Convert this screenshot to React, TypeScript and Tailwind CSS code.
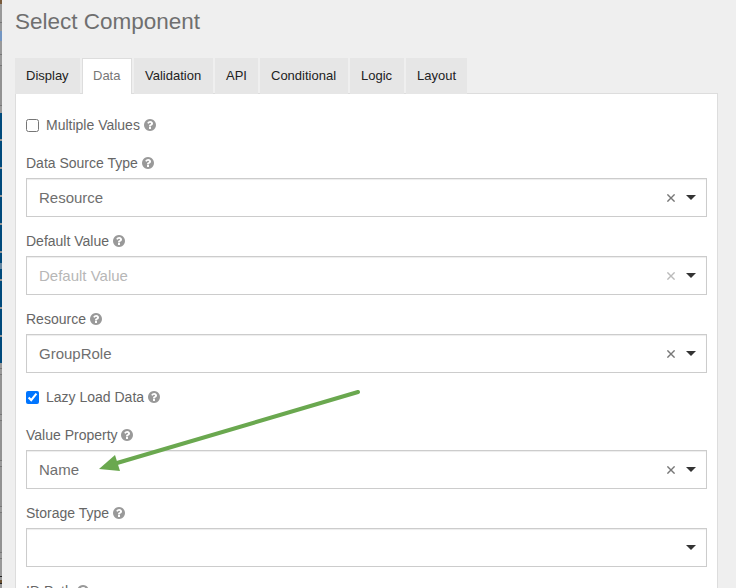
const QUESTION =
  "M1024 1376v-192q0-14-9-23t-23-9h-192q-14 0-23 9t-9 23v192q0 14 9 23t23 9h192q14 0 23-9t9-23zm256-672q0-88-55.5-163t-138.5-116-170-41q-243 0-371 213-15 24 8 42l132 100q7 6 19 6 16 0 25-12 53-68 86-92 34-24 86-24 48 0 85.5 26t37.5 59q0 38-20 61t-68 45q-63 28-115.5 86.5t-52.5 125.5v36q0 14 9 23t23 9h192q14 0 23-9t9-23q0-19 21.5-49.5t54.5-49.5q32-18 49-28.5t46-35 44.5-48 28-60.5 12.5-81zm384 192q0 209-103 385.5t-279.5 279.5-385.5 103-385.5-103-279.5-279.5-103-385.5 103-385.5 279.5-279.5 385.5-103 385.5 103 279.5 279.5 103 385.5z";

function Label({ text }: { text: string }) {
  return (
    <span className="flex h-5 items-center text-[14px] leading-5 text-[#666]">
      <span className="whitespace-pre">{text} </span>
      <svg viewBox="128 128 1536 1536" className="h-3 w-3 fill-[#999]">
        <path d={QUESTION} />
      </svg>
    </span>
  );
}

function Select({ value, placeholder, clearable = true }: { value?: string; placeholder?: string; clearable?: boolean }) {
  return (
    <div className="mt-[5px] flex h-[39px] items-center border border-[#ccc] bg-white pr-[10px] pl-3 shadow-[inset_0_1px_1px_rgba(0,0,0,0.075)]">
      <span className={value ? "flex-1 pt-px text-[15px] leading-[22px] text-[#6f6f6f]" : "flex-1 pt-px text-[15px] leading-[22px] text-[#b7b7b7]"}>
        {value ?? placeholder}
      </span>
      {clearable && (
        <svg viewBox="0 0 8 8" className={value ? "mt-px mr-[11px] h-2 w-2 stroke-[#777]" : "mt-px mr-[11px] h-2 w-2 stroke-[#bbb]"}>
          <path d="M.4.4l7.2 7.2M7.6.4L.4 7.6" strokeWidth="1.4" />
        </svg>
      )}
      <svg viewBox="0 0 10 5" className="mb-px h-[5px] w-[10px] fill-[#333]">
        <path d="M0 0h10L5 5z" />
      </svg>
    </div>
  );
}

function Field(props: { label: string; value?: string; placeholder?: string; clearable?: boolean }) {
  return (
    <div className="mb-[14px]">
      <Label text={props.label} />
      <Select value={props.value} placeholder={props.placeholder} clearable={props.clearable} />
    </div>
  );
}

function Check({ label, checked }: { label: string; checked?: boolean }) {
  return (
    <div className="mb-[18px] flex items-center">
      <input type="checkbox" checked={!!checked} readOnly className="mt-px mr-[7px] h-[13px] w-[13px]" />
      <Label text={label} />
    </div>
  );
}

const tabs = [
  ["Display", "w-[65px]"],
  ["Data", "w-[50px]"],
  ["Validation", "w-[79px]"],
  ["API", "w-[43px]"],
  ["Conditional", "w-[88px]"],
  ["Logic", "w-[54px]"],
  ["Layout", "w-[61px]"],
];

// Sliver of the dimmed page behind the dialog
const strip = [
  "h-[4px] bg-[#795b3c]",
  "h-[18px] bg-[#999]",
  "h-px bg-[#777]",
  "h-[8px] bg-[#999]",
  "h-[10px] bg-[#7396c2]",
  "h-[13px] bg-[#999]",
  "h-px bg-[#777]",
  "h-[10px] bg-[#999]",
  "h-px bg-[#777]",
  "h-[39px] bg-[#929292]",
  "h-px bg-[#777]",
  "h-[7px] bg-[#999]",
  "h-[26px] bg-[#004a7c]",
  "h-[2px] bg-[#999]",
  "h-[26px] bg-[#004a7c]",
  "h-[2px] bg-[#999]",
  "h-[26px] bg-[#004a7c]",
  "h-[2px] bg-[#999]",
  "h-[26px] bg-[#004a7c]",
  "h-[2px] bg-[#999]",
  "h-[26px] bg-[#004a7c]",
  "h-[2px] bg-[#999]",
  "h-[10px] bg-[#004a7c]",
  "h-[6px] bg-[#6487a2]",
  "h-[10px] bg-[#004a7c]",
  "h-[2px] bg-[#999]",
  "h-[26px] bg-[#004a7c]",
  "h-[2px] bg-[#999]",
  "h-[26px] bg-[#004a7c]",
  "h-[2px] bg-[#999]",
  "h-[26px] bg-[#004a7c]",
  "h-[5px] bg-[#999]",
  "h-px bg-[#777]",
  "h-[5px] bg-[#999]",
  "h-px bg-[#777]",
  "h-[39px] bg-[#929292]",
  "h-px bg-[#777]",
  "h-[5px] bg-[#999]",
  "h-px bg-[#777]",
  "h-[39px] bg-[#929292]",
  "h-px bg-[#777]",
  "h-[5px] bg-[#999]",
  "h-px bg-[#777]",
  "h-[39px] bg-[#929292]",
  "h-px bg-[#777]",
  "h-[5px] bg-[#999]",
  "h-px bg-[#777]",
  "h-[39px] bg-[#929292]",
  "h-px bg-[#777]",
  "h-[5px] bg-[#999]",
  "h-px bg-[#777]",
  "h-[17px] bg-[#999]",
  "h-px bg-[#222]",
  "h-[3px] bg-[#999]",
  "h-[3px] bg-[#6b5030]",
  "h-px bg-[#222]",
  "h-[4px] bg-[#999]",
];

export default function App() {
  return (
    <div className="relative flex h-[588px] w-[736px] overflow-hidden bg-[#efefef] font-['Liberation_Sans',Arial,sans-serif]">
      <div className="flex w-[2px] shrink-0 flex-col overflow-hidden">
        {strip.map((s, i) => (
          <div key={i} className={`w-full shrink-0 ${s}`} />
        ))}
      </div>
      <main className="ml-[13px] w-[703px] shrink-0">
        <h1 className="h-[58px] pt-[9px] text-[22.5px] leading-[25px] whitespace-nowrap text-[#6f6f6f]">Select Component</h1>
        <div className="relative z-10 -mb-px flex h-9 gap-[2px]">
          {tabs.map(([name, width]) => (
            <div
              key={name}
              className={`shrink-0 text-[13px] whitespace-nowrap ${width} ${
                name === "Data" ? "border border-b-0 border-[#ddd] bg-white pl-[10px] leading-[33px] text-[#777]" : "h-9 bg-[#e6e6e6] pl-[11px] leading-[35px] text-[#222]"
              }`}
            >
              {name}
            </div>
          ))}
        </div>
        <section className="h-[520px] border border-[#ddd] bg-white px-[10px] pt-[21px]">
          <Check label="Multiple Values" />
          <Field label="Data Source Type" value="Resource" />
          <Field label="Default Value" placeholder="Default Value" />
          <Field label="Resource" value="GroupRole" />
          <Check label="Lazy Load Data" checked />
          <Field label="Value Property" value="Name" />
          <Field label="Storage Type" clearable={false} />
          <Label text="ID Path" />
        </section>
      </main>
      <svg viewBox="0 0 270 90" className="absolute top-[385px] left-[95px] z-20 h-[90px] w-[270px]">
        <path d="M263 7L22 78" stroke="#6aa84f" strokeWidth="4" strokeLinecap="round" />
        <path d="M4 84L20 70L25 86z" fill="#6aa84f" />
      </svg>
    </div>
  );
}
